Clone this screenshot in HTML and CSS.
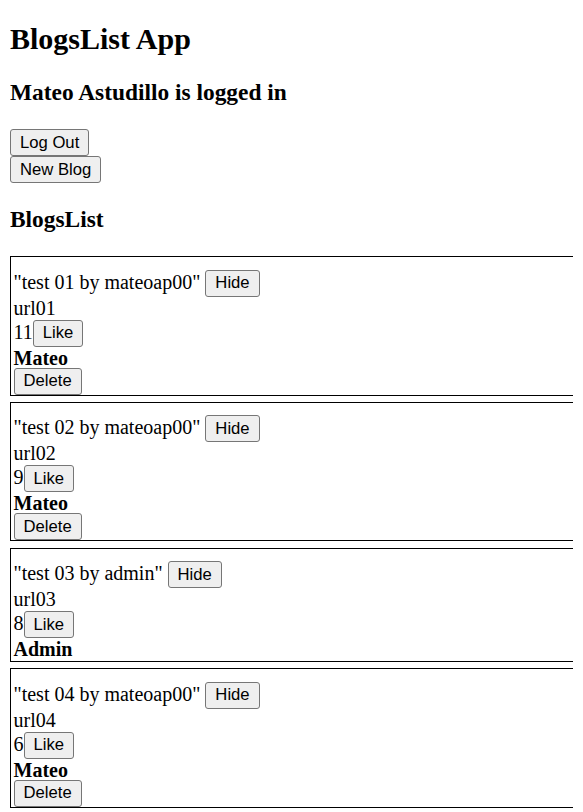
FILE: index.html
```html
<!DOCTYPE html>
<html>
<head>
<meta charset="utf-8">
<link rel="stylesheet" href="styles.css">
</head>
<body>
<div class="app">
  <h1 class="title">BlogsList App</h1>
  <h3 class="heading">Mateo Astudillo is logged in</h3>
  <div><button class="btn">Log Out</button></div>
  <div><button class="btn">New Blog</button></div>
  <h3 class="heading">BlogsList</h3>
  <div class="blog">
    <div>"test 01 by mateoap00" <button class="btn">Hide</button></div>
    <div>url01</div>
    <div>11<button class="btn">Like</button></div>
    <div class="author">Mateo</div>
    <button class="btn btn-block">Delete</button>
  </div>
  <div class="blog">
    <div>"test 02 by mateoap00" <button class="btn">Hide</button></div>
    <div>url02</div>
    <div>9<button class="btn">Like</button></div>
    <div class="author">Mateo</div>
    <button class="btn btn-block">Delete</button>
  </div>
  <div class="blog">
    <div>"test 03 by admin" <button class="btn">Hide</button></div>
    <div>url03</div>
    <div>8<button class="btn">Like</button></div>
    <div class="author">Admin</div>
  </div>
  <div class="blog">
    <div>"test 04 by mateoap00" <button class="btn">Hide</button></div>
    <div>url04</div>
    <div>6<button class="btn">Like</button></div>
    <div class="author">Mateo</div>
    <button class="btn btn-block">Delete</button>
  </div>
</div>
</body>
</html>
```
FILE: styles.css
```css
html {
  overflow: hidden;
}
body {
  margin: 10px;
  font-family: "Liberation Serif", "Times New Roman", serif;
  font-size: 20px;
  color: #000;
  background: #fff;
}
.app {
  margin-right: -40px;
}
.title {
  font-size: 30px;
  font-weight: bold;
  margin: 12px 0 20px;
}
.heading {
  font-size: 23.4px;
  font-weight: bold;
  margin: 23px 0;
}
.btn {
  font-family: "Liberation Sans", Arial, sans-serif;
  font-size: 16.67px;
  color: #000;
  background: #efefef;
  border: 1px solid #767676;
  border-radius: 3px;
  padding: 2.5px 9px;
  margin: 0;
}
.btn-block {
  display: block;
  margin-top: -2px;
}
.author {
  font-weight: bold;
}
.blog {
  padding-top: 12.5px;
  padding-left: 2.5px;
  border: 1px solid #000;
  margin-bottom: 6.25px;
}
```
